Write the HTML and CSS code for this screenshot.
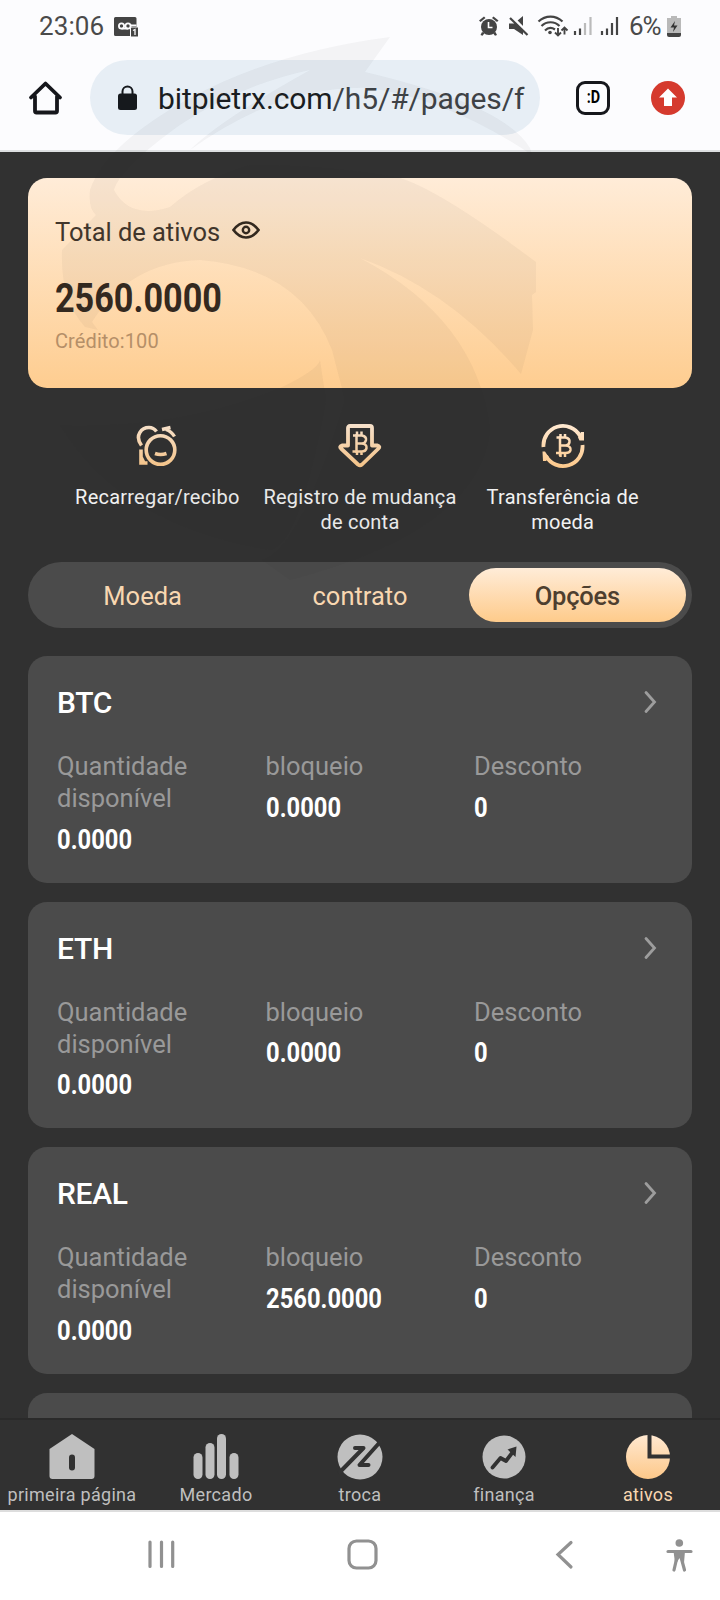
FILE: index.html
```html
<!DOCTYPE html>
<html lang="pt">
<head>
<meta charset="utf-8">
<title>Ativos</title>
<link rel="stylesheet" href="styles.css">
</head>
<body>
<div class="phone">
  <header class="browser">
    <div class="status">
      <span class="clock">23:06</span>
      <svg class="voicemail" width="24" height="20" viewBox="0 0 24 20"><path d="M1.500 0h19.500a1.500 1.500 0 0 1 1.500 1.500V10H16v9H1.500A1.500 1.500 0 0 1 0 17.500v-16A1.500 1.500 0 0 1 1.500 0z" fill="#444"/><rect x="17" y="10.500" width="7" height="9" fill="#444"/><g fill="none" stroke="#fcfcfe" stroke-width="1.800"><circle cx="7.500" cy="9" r="2.600"/><circle cx="14" cy="9" r="2.600"/><path d="M7.500 11.600h6.500M16.500 8.500h6"/></g><path d="M19 13.500l2-1v5.500" fill="none" stroke="#fcfcfe" stroke-width="1.300"/></svg>
      <svg class="status-icons" width="142" height="24" viewBox="0 0 142 24">
        <g fill="#444"><circle cx="10" cy="12" r="8"/><path d="M0 5.500l5-4 1.500 1.500L1.500 7zM19.500 5.500l-5-4L13 3l5 4zM3 17l-1.500 3 2 .8 2-2.500zM16.500 17l1.500 3-2 .8-2-2.500z"/></g><path d="M9.500 7v5.500h4" fill="none" stroke="#fff" stroke-width="1.600"/>
        <path d="M30 8.500h5l9-7.500V20l-9-6h-5z" fill="#444"/><path d="M32 1l18 18" stroke="#fcfcfe" stroke-width="3"/><path d="M31 3l17.500 17" stroke="#444" stroke-width="2.200"/>
        <g fill="none" stroke="#444" stroke-width="2.200"><path d="M59.500 6.500c7-6.500 17-6.500 24 0M62.500 11c5-5 13-5 18 0M66 15.500c3-3 7-3 10-1"/><path d="M79 13v7M76 17.500l3 3 3-3M85.500 19.500v-7M82.500 15.500l3-3 3 3" stroke-width="1.900"/></g><circle cx="71" cy="17.500" r="1.800" fill="#444"/>
        <g stroke-width="2.200"><path d="M96 20v-4M101 20v-6.500" stroke="#444"/><path d="M106 20V8M111.500 20V2" stroke="#bbb"/><path d="M123 20v-4M128 20v-6.500M133 20V8M138 20V2" stroke="#444"/></g>
      </svg>
      <span class="percent">6%</span>
      <svg class="battery" width="14" height="21" viewBox="0 0 14 21"><path d="M4 0h6v2h4v15H0V2h4z" fill="#b9b9b9"/><path d="M0 17h14v2a2 2 0 0 1-2 2H2a2 2 0 0 1-2-2z" fill="#444"/><path d="M8 5l-4.500 6.500H7L6 16l4.500-6.500H7z" fill="#333"/></svg>
    </div>
    <div class="toolbar">
      <svg class="home" width="36" height="36" viewBox="0 0 36 36"><path d="M7 16.500V31q0 1.500 1.500 1.500h19Q29 32.500 29 31V16.500M3 17.500L17.500 3.500 32 17.500" fill="none" stroke="#16171c" stroke-width="3.800" stroke-linejoin="round" stroke-linecap="round"/></svg>
      <div class="address">
        <svg width="20" height="26" viewBox="0 0 20 26"><rect y="8.500" width="19" height="16.500" rx="2.500" fill="#16191d"/><path d="M4.500 9V6.500a5 5 0 0 1 10 0V9" fill="none" stroke="#16191d" stroke-width="2"/></svg>
        <span class="url">bitpietrx.com<span class="path">/h5/#/pages/f</span></span>
      </div>
      <div class="tab-count"><span>:D</span></div>
      <svg class="update" width="34" height="34" viewBox="0 0 34 34"><circle cx="17" cy="17" r="17" fill="#d53a2e"/><path d="M17 7.500l9 9h-5V25h-8v-8.500H8z" fill="#fff"/></svg>
    </div>
  </header>

  <main class="page">
    <section class="total">
      <div class="total-head"><span class="total-label">Total de ativos</span>
        <svg width="28" height="18" viewBox="0 0 28 18"><path d="M1.500 9Q7 1.500 14 1.500T26.500 9Q21 16.500 14 16.500T1.500 9z" fill="none" stroke="#34291f" stroke-width="2.700"/><circle cx="14" cy="9" r="3.200" fill="none" stroke="#34291f" stroke-width="2.400"/></svg>
      </div>
      <div class="amount"><span>2560.0000</span></div>
      <div class="credit">Crédito:100</div>
    </section>

    <nav class="actions">
      <a class="action">
        <svg width="44" height="44" viewBox="0 0 44 44"><defs><linearGradient id="gold" gradientUnits="userSpaceOnUse" x1="0" y1="0" x2="0" y2="44"><stop offset="0" stop-color="#ffe9d2"/><stop offset="1" stop-color="#fdc98b"/></linearGradient></defs><g fill="none" stroke="url(#gold)" stroke-width="3.600"><circle cx="25.500" cy="26" r="14.300"/><path d="M6.500 21.500C-1 11 7 3.500 14 3.500q4.500 0 7.500 4M6 25.500v13.500h6.500M6 33l3 6"/><path d="M27 5.500l8.500-2M31 5.500q5.500 2 8.500 7" stroke-width="3.400"/><path d="M20 29.500q5.500 2 11.500 0"/></g></svg>
        <span>Recarregar/recibo</span></a>
      <a class="action">
        <svg width="44" height="44" viewBox="0 0 44 44"><g fill="none" stroke="url(#gold)" stroke-width="3.800" stroke-linejoin="round"><path d="M12 2h20q2 0 2 2v17.500h5.500q3 1 1 3L24 40.500q-2 1.500-4 0L3 24.500q-2-2 1-3h6V4q0-2 2-2z"/><g stroke-width="2.500"><path d="M18.500 10v19M15 11.500h9q4.500 1 4 4.500-.8 3.500-4 3.500h-5M23.500 19.500q5.500.5 5 4.500-.5 3.500-5 3.500H14.500M19 7.500v4M23.500 7.500v4M19 27v4M23.500 27v4"/></g></g></svg>
        <span>Registro de mudança de conta</span></a>
      <a class="action">
        <svg width="44" height="44" viewBox="0 0 44 44"><g fill="none" stroke="url(#gold)" stroke-width="3.800"><path d="M2.500 23A19.500 19.500 0 0 1 39 12M41.500 21A19.500 19.500 0 0 1 5 32"/><path d="M19 12v20M15.500 13.500h9q4.500 1 4 4.500-.5 3.500-4 3.500H19M24.500 21.500q5.500.5 5 4.500-.5 3-5 3H15M19.500 10v3.500M24 10v3.500M19.500 29v4M24 29v4" stroke-width="2.500"/></g><path d="M40 8h3v8.500h-4.500l-1.500-3zM1.500 27.500h2.500l4 6-3 3.500H2z" fill="url(#gold)"/></svg>
        <span>Transferência de moeda</span></a>
    </nav>

    <div class="tabs"><span class="tab">Moeda</span><span class="tab">contrato</span><span class="tab active">Opções</span></div>

    <section class="coin">
      <div class="coin-head"><h2>BTC</h2><svg width="13" height="24" viewBox="0 0 13 24"><path d="M2 2.500L10.500 12 2 21.500" fill="none" stroke="#9d9d9d" stroke-width="2.800" stroke-linecap="round"/></svg></div>
      <div class="stats"><dl><dt>Quantidade disponível</dt><dd>0.0000</dd></dl><dl><dt>bloqueio</dt><dd>0.0000</dd></dl><dl><dt>Desconto</dt><dd>0</dd></dl></div>
    </section>
    <section class="coin">
      <div class="coin-head"><h2>ETH</h2><svg width="13" height="24" viewBox="0 0 13 24"><path d="M2 2.500L10.500 12 2 21.500" fill="none" stroke="#9d9d9d" stroke-width="2.800" stroke-linecap="round"/></svg></div>
      <div class="stats"><dl><dt>Quantidade disponível</dt><dd>0.0000</dd></dl><dl><dt>bloqueio</dt><dd>0.0000</dd></dl><dl><dt>Desconto</dt><dd>0</dd></dl></div>
    </section>
    <section class="coin">
      <div class="coin-head"><h2>REAL</h2><svg width="13" height="24" viewBox="0 0 13 24"><path d="M2 2.500L10.500 12 2 21.500" fill="none" stroke="#9d9d9d" stroke-width="2.800" stroke-linecap="round"/></svg></div>
      <div class="stats"><dl><dt>Quantidade disponível</dt><dd>0.0000</dd></dl><dl><dt>bloqueio</dt><dd>2560.0000</dd></dl><dl><dt>Desconto</dt><dd>0</dd></dl></div>
    </section>
    <section class="coin"></section>
  </main>

  <nav class="tabbar">
    <a><svg width="46" height="46" viewBox="0 0 46 46"><path d="M23 0l22.500 15v27q0 3-3 3h-39q-3 0-3-3V15z" fill="#bfbfbf"/><rect x="20" y="20.500" width="6" height="16" rx="3" fill="#323232"/></svg><span>primeira página</span></a>
    <a><svg width="46" height="46" viewBox="0 0 46 46"><g fill="#bfbfbf"><rect x=".5" y="19" width="9" height="26" rx="4.500"/><rect x="12.500" y="9" width="9" height="36" rx="4.500"/><rect x="24" y="0" width="9" height="45" rx="4.500"/><rect x="36.500" y="19" width="9" height="26" rx="4.500"/></g></svg><span>Mercado</span></a>
    <a><svg width="46" height="46" viewBox="0 0 46 46"><circle cx="23" cy="23" r="22.500" fill="#bfbfbf"/><g fill="none" stroke="#323232" stroke-width="4" stroke-linejoin="round" stroke-linecap="round"><path d="M18 14h8.500L3 38M31.500 31H22.500L43.500 7.500"/></g></svg><span>troca</span></a>
    <a><svg width="46" height="46" viewBox="0 0 46 46"><circle cx="23" cy="23" r="21.500" fill="#bfbfbf"/><path d="M11.500 33.500l8-9.500 5.500 3 7.500-10" fill="none" stroke="#323232" stroke-width="3.800" stroke-linecap="round" stroke-linejoin="round"/><path d="M26.500 15.500l9-3-1 10.500z" fill="#323232"/></svg><span>finança</span></a>
    <a class="current"><svg width="46" height="46" viewBox="0 0 46 46"><circle cx="23" cy="23" r="22" fill="url(#gold)"/><path d="M24.500 0v22.500H46" fill="none" stroke="#323232" stroke-width="4"/></svg><span>ativos</span></a>
  </nav>

  <footer class="system">
    <svg width="720" height="88" viewBox="0 0 720 88"><g fill="none" stroke="#919191" stroke-width="3.200" stroke-linecap="round"><path d="M150 30v24.500M161.500 30v24.500M172.700 30v24.500"/><rect x="349" y="29" width="27" height="27" rx="7.500"/><path d="M571 30.500L558 42.500l13 12.500M668 39.500h23M677 45l-3 13M681 45l3.500 13"/></g><circle cx="679.300" cy="31" r="3.800" fill="#919191"/><path d="M673.500 39h11.500l-1 12h-1.500l-3-5-3 5H675z" fill="#919191"/></svg>
  </footer>

  <svg class="watermark" width="720" height="620" viewBox="0 0 720 620">
    <g fill="#31292a" fill-opacity=".045">
      <path d="M390 37Q275 52 190 98Q105 145 90 190Q88 208 96 215L62 250Q60 300 85 327L98 330L92 322Q130 262 200 260Q300 268 332 350L345 400Q300 550 262 560L290 580Q480 530 490 430Q478 320 360 258Q450 290 521 374L533 330L532 295L536 292V262Q440 190 400 178Q330 165 250 165Q200 180 170 207Q130 220 114 190Q120 168 180 125Q240 85 310 70Q220 120 190 150Q280 85 370 88Q450 100 532 155L530 148Q505 105 365 72z"/>
      <path d="M60 425Q180 430 280 388Q318 370 320 360L326 400Q300 545 270 550Q120 525 60 425z"/>
    </g>
  </svg>
</div>
</body>
</html>
```
FILE: styles.css
```css
* { box-sizing: border-box; }
body { margin: 0; font-family: Roboto, "Liberation Sans", sans-serif; background: #313131; }
svg { display: block; flex: none; }
.phone { position: relative; width: 720px; height: 1600px; display: flex; flex-direction: column; overflow: hidden; }

.browser { height: 152px; flex: none; background: #fcfcfe; border-bottom: 2px solid #dddfe1; }
.status { height: 60px; display: flex; align-items: flex-start; padding: 11px 38px 0 39px; color: #4a4a4a; font-size: 26px; line-height: 30px; }
.clock { width: 75px; letter-spacing: .1px; }
.voicemail { margin-top: 6px; }
.status-icons { margin: 4px 0 0 341px; }
.percent { margin-left: 8px; width: 38px; letter-spacing: -1px; }
.battery { margin-top: 5px; }
.toolbar { display: flex; align-items: center; height: 75px; }
.home { margin-left: 28px; }
.address { width: 450px; height: 75px; margin-left: 26px; padding-left: 28px; border-radius: 38px; background: #e7eef5; display: flex; align-items: center; }
.url { margin: 2px 0 0 20px; font-size: 30px; letter-spacing: -.11px; color: #1a1d21; white-space: nowrap; }
.path { color: #3e4246; }
.tab-count { width: 34px; height: 34px; margin-left: 36px; border: 3.500px solid #16171c; border-radius: 9px; font-size: 18px; line-height: 25px; font-weight: 700; text-align: center; }
.tab-count span { display: inline-block; transform: scaleX(.8); }
.update { margin-left: 41px; }

.page { height: 1266px; flex: none; overflow: hidden; padding: 26px 28px 0; display: flex; flex-direction: column; }
.total { height: 210px; flex: none; padding: 38px 27px 0; border-radius: 19px; background: linear-gradient(#ffecd8, #fecd90); color: #34291f; }
.total-head { display: flex; align-items: center; height: 32px; gap: 12px; }
.total-head svg { margin-top: -4px; }
.total-label { width: 165px; font-size: 25.500px; letter-spacing: -.05px; color: #42362b; white-space: nowrap; }
.amount { margin-top: 27px; height: 48px; font-size: 40px; line-height: 48px; font-weight: 700; }
.amount span { display: inline-block; transform: scaleX(.855); transform-origin: left; }
.credit { font-size: 20px; line-height: 24px; margin-top: 6px; color: #b58f68; letter-spacing: .1px; }
.actions { height: 174px; flex: none; padding: 36px 28px 0; display: grid; grid-template-columns: repeat(3, 1fr); }
.action { display: flex; flex-direction: column; align-items: center; color: #f2f2f2; font-size: 20px; line-height: 25px; text-align: center; letter-spacing: .23px; }
.action span { margin-top: 17px; }
.tabs { height: 66px; flex: none; border-radius: 33px; background: #4b4b4b; padding: 6px; display: grid; grid-template-columns: repeat(3, 1fr); }
.tab { height: 54px; color: #f8d7b1; font-size: 25.500px; line-height: 56px; text-align: center; }
.tab.active { border-radius: 27px; background: linear-gradient(#ffecd8, #fecb8b); color: #4e3f2f; font-weight: 500; line-height: 56px; letter-spacing: -.2px; }

.coin { height: 226.600px; flex: none; margin-top: 19px; border-radius: 19px; background: #4b4b4b; padding: 29px 29px 0; }
.tabs + .coin { margin-top: 28px; }
.coin-head { display: flex; justify-content: space-between; height: 52px; padding-right: 6px; }
.coin-head svg { margin-top: 5px; }
h2 { margin: 0; font-size: 30px; line-height: 36px; font-weight: 500; letter-spacing: -.3px; color: #fff; }
.stats { display: grid; grid-template-columns: repeat(3, 208.500px); margin-top: 13px; }
dl, dd { margin: 0; }
dt { width: 160px; color: #999; font-size: 25.500px; line-height: 32px; }
dd { color: #fff; font-size: 27px; line-height: 32px; margin-top: 9.500px; font-weight: 700; transform: scaleX(.88); transform-origin: left; }

.tabbar { height: 92px; flex: none; display: grid; grid-template-columns: repeat(5, 144px); background: #313131; border-top: 2px solid #2a2a2a; }
.tabbar a { display: flex; flex-direction: column; align-items: center; padding-top: 14px; color: #bfbfbf; font-size: 18px; line-height: 22px; letter-spacing: .3px; white-space: nowrap; }
.tabbar span { margin-top: 4px; }
.tabbar .current { color: #f8d7b1; }
.system { height: 90px; flex: none; background: #fff; border-top: 2px solid #ddd; }
.watermark { position: absolute; left: 0; top: 0; }
```
